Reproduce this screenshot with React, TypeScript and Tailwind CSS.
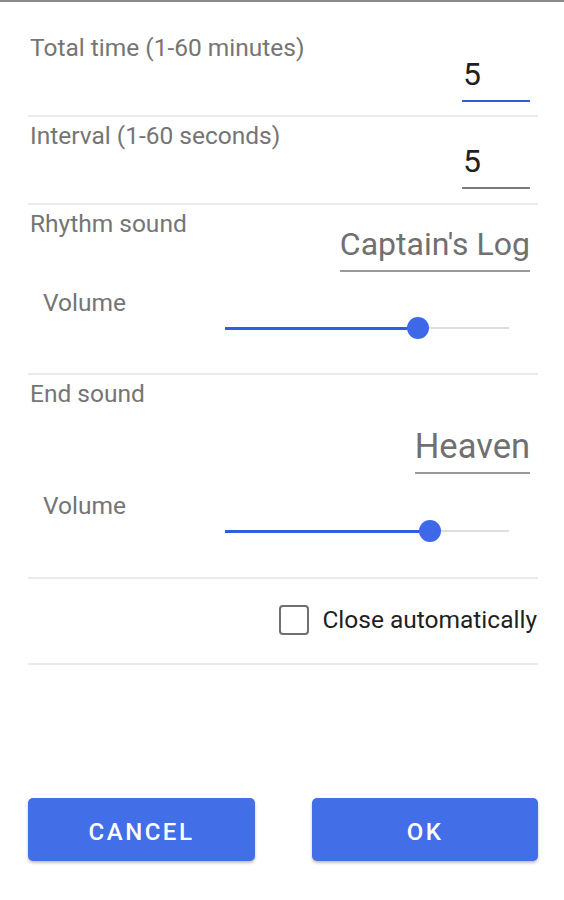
import React from "react";

function Divider() {
  return <div className="h-[2px] w-full bg-[#ebebeb]" />;
}

function Slider({ pos }: { pos: number }) {
  return (
    <div className="relative h-[22px] w-[284px]">
      <div className="absolute left-0 right-0 top-[10px] h-[2px] bg-[#dedede]" />
      <div
        className="absolute left-0 top-[10px] h-[2.5px] bg-[#2f5fe0]"
        style={{ width: pos }}
      />
      <div
        className="absolute top-0 h-[22px] w-[22px] rounded-full bg-[#3d69e8]"
        style={{ left: pos - 11 }}
      />
    </div>
  );
}

export default function App() {
  return (
    <div
      className="w-[564px] h-[900px] bg-white border-t-2 border-[#8a8a8a] overflow-hidden"
      style={{ fontFamily: "Roboto, 'Noto Sans', sans-serif" }}
    >
      <div className="ml-[28px] w-[510px]">
        {/* Section 1 */}
        <div className="h-[113px] flex justify-between">
          <div className="mt-[32px] pl-[2px] text-[24.5px] leading-[28px] text-[#757575]">
            Total time (1-60 minutes)
          </div>
          <div className="mt-[53px] mr-[8px] w-[68px]">
            <div className="text-[32px] leading-[38px] text-[#1f1f1f] pl-[1px]">5</div>
            <div className="mt-[7px] h-[2px] bg-[#2a5fd9]" />
          </div>
        </div>
        <Divider />

        {/* Section 2 */}
        <div className="h-[86px] flex justify-between">
          <div className="mt-[5px] pl-[2px] text-[24.5px] leading-[28px] text-[#757575]">
            Interval (1-60 seconds)
          </div>
          <div className="mt-[25px] mr-[8px] w-[68px]">
            <div className="text-[32px] leading-[38px] text-[#1f1f1f] pl-[1px]">5</div>
            <div className="mt-[7px] h-[1.5px] bg-[#7a7a7a]" />
          </div>
        </div>
        <Divider />

        {/* Section 3 */}
        <div className="h-[168px] flex flex-col">
          <div className="flex justify-between">
            <div className="mt-[5px] pl-[2px] text-[24.5px] leading-[28px] text-[#757575]">
              Rhythm sound
            </div>
            <div className="mt-[20px] mr-[8px]">
              <div className="text-[32px] leading-[38px] text-[#707070]">Captain's Log</div>
              <div className="mt-[7px] h-[2px] bg-[#9a9a9a]" />
            </div>
          </div>
          <div className="mt-[17px] flex justify-between">
            <div className="pl-[15px] text-[24.5px] leading-[28px] text-[#757575]">Volume</div>
            <div className="mt-[28px] mr-[29px]">
              <Slider pos={193} />
            </div>
          </div>
        </div>
        <Divider />

        {/* Section 4 */}
        <div className="h-[202px] flex flex-col">
          <div className="mt-[5px] pl-[2px] text-[24.5px] leading-[28px] text-[#757575]">
            End sound
          </div>
          <div className="mt-[19px] flex justify-end">
            <div className="mr-[8px]">
              <div className="text-[34.5px] leading-[38px] text-[#707070]">Heaven</div>
              <div className="mt-[7px] h-[2px] bg-[#9a9a9a]" />
            </div>
          </div>
          <div className="mt-[18px] flex justify-between">
            <div className="pl-[15px] text-[24.5px] leading-[28px] text-[#757575]">Volume</div>
            <div className="mt-[28px] mr-[29px]">
              <Slider pos={205} />
            </div>
          </div>
        </div>
        <Divider />

        {/* Section 5 */}
        <div className="h-[84px] flex justify-end items-start">
          <div className="mt-[26px] mr-[1px] flex items-center gap-[13px]">
            <div className="h-[30px] w-[30px] rounded-[4px] border-[2.5px] border-[#6f6f6f]" />
            <div className="text-[24.5px] leading-[28px] text-[#1f1f1f]">Close automatically</div>
          </div>
        </div>
        <Divider />

        {/* Buttons */}
        <div className="mt-[133px] flex justify-between">
          <button className="h-[63px] w-[227px] pt-[5px] rounded-[5px] bg-[#426ee8] text-white text-[24px] font-medium tracking-[2.5px] shadow-[0_2px_3px_rgba(0,0,0,0.25)]">
            CANCEL
          </button>
          <button className="h-[63px] w-[226px] pt-[5px] rounded-[5px] bg-[#426ee8] text-white text-[24px] font-medium tracking-[2.5px] shadow-[0_2px_3px_rgba(0,0,0,0.25)]">
            OK
          </button>
        </div>
      </div>
    </div>
  );
}
